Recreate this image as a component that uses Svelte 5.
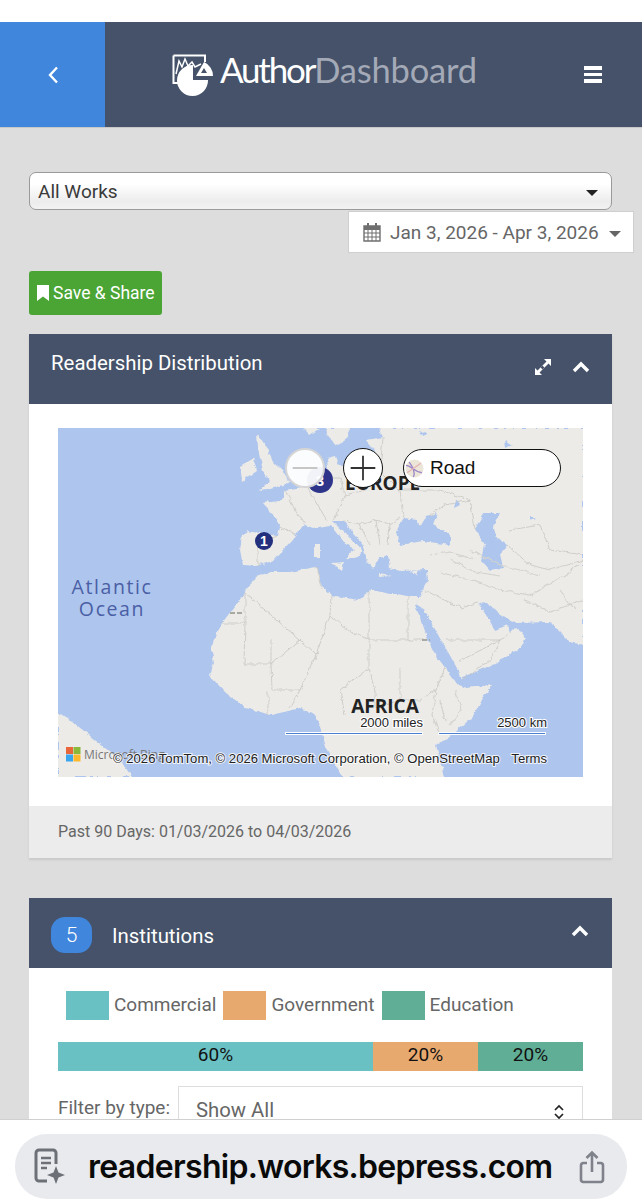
<script>
  const legend = [
    { label: 'Commercial', cls: 'teal' },
    { label: 'Government', cls: 'orange' },
    { label: 'Education', cls: 'green' }
  ];
  const bars = [
    { label: '60%', cls: 'teal', grow: 315 },
    { label: '20%', cls: 'orange', grow: 105 },
    { label: '20%', cls: 'green', grow: 105 }
  ];
  const borders = [
    'M245 593L271 615L300 640L316 655M222 623L245 623L245 593M245 623L244 664L271 664L271 640M271 664L300 640',
    'M316 567L322 590M331 595L330 615L316 655L300 690L272 690L271 664M330 615L343 627L369 640M369 590L369 640L369 668L340 690L345 715M369 640L424 640M408 597L408 640',
    'M300 690L290 708M268 691L268 715M369 668L375 690L375 708L400 700M400 668L400 700L420 700L436 690L445 668',
    'M425 590L440 598L462 608L478 602M462 680L490 660L500 640L512 632M458 662L500 640M446 640L500 640',
    'M278 536L258 545L258 566M280 526L295 535M285 490L295 510L305 525M307 486L318 505L327 521M320 478L340 478L345 495L333 521M345 495L365 490L380 470L383 438',
    'M343 521L360 525L376 520L390 525L400 518M360 525L370 545M376 520L380 545M390 525L388 545M380 470L400 490L403 518M400 490L440 490L470 500L475 528',
    'M430 515L445 505L470 500M510 530L540 525L550 550L583 555M507 545L530 565L550 570L583 560'
  ];
  const rough = [
    'M440 572L470 580L500 590L530 595L560 578L580 565M450 560L475 572L500 576M470 550L500 565L540 575',
    'M430 555L450 552L475 560M525 600L550 612L583 600M560 590L575 610',
    'M455 690L462 710L450 725M440 700L445 720M436 690L432 715L440 735'
  ];
</script>

<div class="page">
  <div class="status"></div>

  <header class="topbar">
    <button class="back" aria-label="Back">
      <svg viewBox="0 0 14 20" width="14" height="20"><path d="M11 2.500 4 10l7 7.500" fill="none" stroke="#fff" stroke-width="2.400"/></svg>
    </button>
    <div class="brand">
      <svg class="mark" viewBox="0 0 42 42" width="42" height="42">
        <path d="M1.500 1.500H33V8M1.500 1.500V29H6" fill="none" stroke="#fff" stroke-width="2"/>
        <path d="M4 20 7 7l3 6 3-8 3 7 4-4 3 5 6-3" fill="none" stroke="#fff" stroke-width="1.500"/>
        <path d="M21 11a15.500 15.500 0 1 0 15 15H21z" fill="#fff"/>
        <path d="M24 22 32 8a15 15 0 0 1 9 14z" fill="#fff"/>
        <path d="M29 19l3-5 3 5z" fill="#455269"/>
      </svg>
      <span class="wordmark">Author<span>Dashboard</span></span>
    </div>
    <button class="menu" aria-label="Menu"><i></i><i></i><i></i></button>
  </header>

  <main>
    <div class="select">
      <span>All Works</span>
      <i class="caret"></i>
    </div>
    <div class="date-row">
      <div class="date">
        <svg viewBox="0 0 18 20" width="18" height="20">
          <path d="M1 4h16v15H1z" fill="none" stroke="#6f6f6f" stroke-width="1.400"/>
          <path d="M1 4h16v4H1z" fill="#6f6f6f"/>
          <path d="M1 11h16M1 15h16M5 8v11M9 8v11M13 8v11" stroke="#6f6f6f" stroke-width="1"/>
          <path d="M5 1v4M13 1v4" stroke="#6f6f6f" stroke-width="2"/>
        </svg>
        <span>Jan 3, 2026 - Apr 3, 2026</span>
        <i class="caret grey"></i>
      </div>
    </div>
    <button class="save">
      <svg viewBox="0 0 12 16" width="12" height="16"><path d="M0 0h12v16L6 11.500 0 16z" fill="#fff"/></svg>
      Save &amp; Share
    </button>

    <section class="panel first">
      <div class="panel-head">
        <h2>Readership Distribution</h2>
        <div class="head-icons">
          <svg viewBox="0 0 18 18" width="18" height="18">
            <path d="M10 1h7v7l-2.500-2.500L5.500 14.500 8 17H1v-7l2.500 2.500 9-9z" fill="#fff"/>
            <path d="M7.500 8.500 9.500 10.500" stroke="#455269" stroke-width="2.500"/>
          </svg>
          <svg class="chev" viewBox="0 0 18 12" width="18" height="12"><path d="M2 10 9 3l7 7" fill="none" stroke="#fff" stroke-width="3.400"/></svg>
        </div>
      </div>
      <div class="map-wrap">
        <div class="map">
          <svg class="map-art" viewBox="58 428 525 349" width="525" height="349">
            <defs>
              <filter id="rough" x="0" y="0" width="100%" height="100%">
                <feTurbulence type="fractalNoise" baseFrequency="0.14" numOctaves="3" seed="4" result="noise"/>
                <feDisplacementMap in="SourceGraphic" in2="noise" scale="5" xChannelSelector="R" yChannelSelector="G"/>
                <feGaussianBlur stdDeviation="0.400"/>
              </filter>
            </defs>
            <rect x="58" y="428" width="525" height="349" fill="#aec5ed"/>
            <g filter="url(#rough)">
              <g fill="#ecebe8">
                <!-- Eurasia -->
                <path d="M242 535L248 531L278 536L280 526L273 515L262 503L280 501L285 490L307 486L320 478L328 468L327 458L335 456L338 466L363 465L377 458L372 448L367 441L383 438L380 428L583 428L583 645L570 642L560 632L550 622L517 623L500 615L487 602L478 603L488 618L495 630L508 625L510 633L515 628L527 638L520 648L497 663L460 678L458 670L448 652L437 633L425 610L416 604L420 595L428 580L427 570L400 571L390 568L388 555L380 558L373 568L367 561L362 543L343 521L333 521L348 535L362 551L356 558L345 558L355 550L343 541L330 525L313 528L305 525L295 535L292 540L282 551L273 561L255 566L243 565L240 550Z"/>
                <!-- Britain & Ireland -->
                <path d="M257 433L267 448L273 461L283 471L290 483L267 490L258 491L270 481L263 471L258 448Z"/>
                <path d="M240 466L253 458L257 471L242 481Z"/>
                <!-- Scandinavia -->
                <path d="M303 428L310 435L320 428Z"/>
                <path d="M326 428L328 438L337 446L345 441L350 428Z"/>
                <!-- Africa -->
                <path d="M256 577L245 593L222 623L211 647L214 663L209 675L226 693L246 708L271 715L301 708L316 715L320 727L327 750L342 777L444 777L440 760L436 745L451 735L473 717L483 698L492 685L467 688L458 685L447 670L437 657L425 633L417 610L415 605L420 597L406 597L371 590L357 600L331 595L322 587L316 567L290 572L271 572Z"/>
                <!-- South America -->
                <path d="M58 712L79 727L120 760L132 777L58 777Z"/>
                <!-- Islands -->
                <path d="M314 545L320 545L320 558L314 558Z M332 563L344 562L342 570Z M378 574L392 576L378 577Z M410 572L418 570L416 575Z"/>
              </g>
              <g fill="#aec5ed">
                <path d="M403 518L417 520L420 526L426 516L437 513L433 525L450 535L450 545L423 541L400 545L396 532Z"/>
                <path d="M485 513L500 513L493 525L497 538L507 545L500 555L503 568L490 570L482 561L485 545L475 528Z"/>
                <path d="M420 430L426 434L422 436Z M505 440L512 445L506 448Z M456 500L460 505L454 508Z M530 515L536 518L530 520Z"/>
              </g>
              <g fill="none" stroke="#c6c5c0" stroke-width="0.800">
                {#each borders as d}<path {d}/>{/each}
              </g>
              <g fill="none" stroke="#d3d2cd" stroke-width="1.200">
                {#each rough as d}<path {d}/>{/each}
              </g>
            </g>
            <path d="M422 640h8M230 613h14" stroke="#a9a9a4" stroke-width="2" stroke-dasharray="5 2"/>
            <text class="ocean" x="112" y="594" text-anchor="middle">Atlantic</text>
            <text class="ocean" x="112" y="616" text-anchor="middle">Ocean</text>
            <text class="continent" x="385" y="713" text-anchor="middle">AFRICA</text>
            <text class="continent" x="345" y="490">EUROPE</text>
            <circle cx="320" cy="480" r="13" fill="#2e348a"/>
            <text class="pin" x="320" y="486" text-anchor="middle" font-size="15">3</text>
            <circle cx="264" cy="541" r="9" fill="#22307e"/>
            <text class="pin" x="264" y="546" text-anchor="middle" font-size="14">1</text>
            <text class="scale" x="423" y="727" text-anchor="end">2000 miles</text>
            <text class="scale" x="547" y="727" text-anchor="end">2500 km</text>
            <path d="M285 733.500H423M438 733.500H546" stroke="#fff" stroke-width="3"/>
            <path d="M286 733.500H422M439 733.500H545" stroke="#4b7fd0" stroke-width="1"/>
            <rect x="66" y="747" width="7" height="7" fill="#e8663a"/>
            <rect x="73.500" y="747" width="7" height="7" fill="#8ab83a"/>
            <rect x="66" y="754.500" width="7" height="7" fill="#3ba6ee"/>
            <rect x="73.500" y="754.500" width="7" height="7" fill="#fdb92d"/>
            <text class="ms" x="84" y="759">Microsoft Bing</text>
            <text class="attr" x="113" y="763">© 2026 TomTom, © 2026 Microsoft Corporation, © OpenStreetMap</text>
            <text class="attr" x="547" y="763" text-anchor="end">Terms</text>
          </svg>
          <div class="controls">
            <button class="zoom off" aria-label="Zoom out"><svg viewBox="0 0 38 38" width="36" height="36"><path d="M6 19h26" stroke="#bdbdbd" stroke-width="1.800"/></svg></button>
            <button class="zoom" aria-label="Zoom in"><svg viewBox="0 0 38 38" width="36" height="36"><path d="M6 19h26M19 6v26" stroke="#333" stroke-width="1.900"/></svg></button>
            <div class="road">
              <svg viewBox="0 0 18 18" width="19" height="19">
                <circle cx="9" cy="9" r="8.500" fill="#ece6d8"/>
                <path d="M1 6c5 0 7 6 15 7M4 3c3 4 6 10 4 14" fill="none" stroke="#9c86c9" stroke-width="1.300"/>
                <path d="M2 13 15 4" stroke="#e3b3b3" stroke-width="1.200"/>
              </svg>
              <span>Road</span>
            </div>
          </div>
        </div>
      </div>
      <div class="panel-foot">Past 90 Days: 01/03/2026 to 04/03/2026</div>
    </section>

    <section class="panel">
      <div class="panel-head inst">
        <span class="count">5</span>
        <h2>Institutions</h2>
        <svg class="chev solo" viewBox="0 0 18 12" width="18" height="12"><path d="M2 10 9 3l7 7" fill="none" stroke="#fff" stroke-width="3.400"/></svg>
      </div>
      <div class="inst-body">
        <div class="legend">
          {#each legend as item}
            <div class="legend-item"><i class={item.cls}></i><span>{item.label}</span></div>
          {/each}
        </div>
        <div class="stack">
          {#each bars as b}
            <div class={b.cls} style="flex-basis:{b.grow}px">{b.label}</div>
          {/each}
        </div>
        <div class="filter">
          <label for="t">Filter by type:</label>
          <div class="filter-box" id="t">
            <span>Show All</span>
            <svg viewBox="0 0 12 18" width="12" height="18"><path d="M2 7l4-4 4 4M2 11l4 4 4-4" fill="none" stroke="#222" stroke-width="1.700"/></svg>
          </div>
        </div>
      </div>
    </section>
  </main>

  <footer class="browser">
    <div class="pill">
      <svg class="doc" viewBox="0 0 32 38" width="32" height="38">
        <path d="M14 33H6a3 3 0 0 1-3-3V5a3 3 0 0 1 3-3h14a3 3 0 0 1 3 3v11" fill="none" stroke="#6d7077" stroke-width="3"/>
        <path d="M8 10h10M8 15h10M8 20h6" stroke="#6d7077" stroke-width="2.400"/>
        <path d="M23 18l2.500 6.500L32 27l-6.500 2.500L23 36l-2.500-6.500L14 27l6.500-2.500z" fill="#6d7077"/>
      </svg>
      <span class="url">readership.works.bepress.com</span>
      <svg class="share" viewBox="0 0 26 34" width="26" height="34">
        <path d="M8 13H4a2.500 2.500 0 0 0-2 2.500v14A2.500 2.500 0 0 0 4 32h18a2.500 2.500 0 0 0 2-2.500v-14A2.500 2.500 0 0 0 22 13h-4" fill="none" stroke="#7f828a" stroke-width="2.600"/>
        <path d="M13 22V3M7.500 8 13 2.500 18.500 8" fill="none" stroke="#7f828a" stroke-width="2.600"/>
      </svg>
    </div>
  </footer>
</div>

<style>
  :global(body) { margin: 0; background: #dddddd; overflow: hidden; }
  .page { width: 642px; height: 1200px; overflow: hidden; position: relative; font-family: Roboto, "Liberation Sans", sans-serif; background: #dddddd; }
  .status { height: 22px; background: #fff; }
  button { border: 0; padding: 0; margin: 0; font: inherit; cursor: pointer; }

  .topbar { height: 105px; background: #455269; display: flex; align-items: stretch; box-shadow: 0 1px 0 #c8c8c8; }
  .back { width: 105px; background: #3f86dc; display: flex; align-items: center; justify-content: center; }
  .brand { flex: 1; display: flex; align-items: center; gap: 6px; padding: 0 0 0 67px; }
  .wordmark { font-family: Lato, sans-serif; font-weight: 400; font-size: 35px; letter-spacing: -2.200px; color: #fff; line-height: 1; margin-top: -9px; }
  .wordmark span { color: #a3a9b6; letter-spacing: -0.200px; font-size: 34.500px; }
  .menu { width: 18px; margin-right: 40px; background: none; display: flex; flex-direction: column; justify-content: center; gap: 3px; }
  .menu i { display: block; height: 3.500px; background: #fff; }

  main { padding: 45px 30px 0 29px; }
  .select { height: 36px; border: 1px solid #9a9a9a; border-radius: 7px; background: linear-gradient(#fff, #fff 30%, #ececec 80%, #f2f2f2); display: flex; align-items: center; justify-content: space-between; padding: 0 13px 0 8px; color: #3a3a3a; font-size: 19px; }
  .caret { width: 0; height: 0; border-left: 6px solid transparent; border-right: 6px solid transparent; border-top: 6px solid #222; margin-top: 3px; }
  .caret.grey { border-top-color: #666; border-left-width: 6.500px; border-right-width: 6.500px; }
  .date-row { display: flex; justify-content: flex-end; margin-right: -22px; margin-top: 1px; }
  .date { width: 286px; height: 42px; background: #fff; border: 1px solid #cfcfcf; display: flex; align-items: center; padding-left: 14px; gap: 9px; color: #666; font-size: 19px; box-sizing: border-box; }
  .date .caret { margin-left: 1px; }
  .save { display: flex; align-items: center; gap: 4px; margin-top: 18px; width: 133px; height: 44px; background: #4aa535; color: #fff; border-radius: 3px; font-size: 17.500px; padding-left: 8px; box-sizing: border-box; }

  .panel { background: #fff; }
  .panel.first { margin-top: 19px; margin-bottom: 40px; box-shadow: 0 2px 2px #c9c9c9; }
  .panel-head { height: 70px; background: #455269; color: #fff; display: flex; justify-content: space-between; padding: 0 22px; box-sizing: border-box; }
  h2 { margin: 0; font-weight: 400; font-size: 20.400px; line-height: 59px; }
  .head-icons { display: flex; gap: 20px; align-items: center; height: 66px; }
  .map-wrap { padding: 24px 29px 29px; height: 349px; }
  .map { position: relative; width: 525px; height: 349px; overflow: hidden; }
  .map-art { display: block; }
  .ocean { font-family: "Open Sans", sans-serif; font-size: 19.500px; letter-spacing: 1.600px; fill: #4a5fa5; }
  .continent { font-family: "Open Sans", sans-serif; font-weight: 700; font-size: 19px; fill: #222; }
  .pin { font-family: "Liberation Sans", sans-serif; font-weight: 700; fill: #fff; }
  .scale { font-family: "Liberation Sans", sans-serif; font-size: 13px; fill: #222; stroke: #fff; stroke-width: 2px; paint-order: stroke; }
  .ms { font-family: "Open Sans", sans-serif; font-size: 12px; fill: #777; }
  .attr { font-family: "Liberation Sans", sans-serif; font-size: 13.100px; fill: #222; stroke: rgba(255,255,255,.8); stroke-width: 2px; paint-order: stroke; }
  .controls { position: absolute; left: 227px; top: 20px; display: flex; gap: 18px; align-items: center; }
  .zoom { width: 40px; height: 40px; border-radius: 50%; background: #fff; border: 1.500px solid #111; box-sizing: border-box; display: flex; align-items: center; justify-content: center; }
  .zoom.off { border: 2px solid #d5d5d5; background: rgba(255,255,255,.94); }
  .road { width: 158px; height: 38px; border: 1.500px solid #111; border-radius: 20px; background: #fff; display: flex; align-items: center; gap: 6px; font-family: "Liberation Sans", sans-serif; font-size: 19px; color: #111; padding-left: 1px; box-sizing: border-box; margin-left: 2px; }
  .panel-foot { background: #ececec; height: 52px; padding-left: 29px; box-sizing: border-box; line-height: 52px; font-size: 16px; color: #666; }

  .inst { justify-content: flex-start; align-items: center; padding-top: 4px; }
  .count { width: 41px; height: 36px; border-radius: 14px; background: #3f86dc; color: #fff; font-size: 21px; font-weight: 300; display: flex; align-items: center; justify-content: center; margin-right: 20px; }
  .inst h2 { line-height: 36px; flex: 1; padding-top: 2px; }
  .chev.solo { margin: -8px 1px 0 0; }
  .inst-body { padding: 23px 29px 0; }
  .legend { display: flex; padding-left: 8px; gap: 7px; height: 29px; }
  .legend-item { display: flex; align-items: center; gap: 5px; font-size: 19px; color: #666; }
  .legend-item span { margin-top: -3px; }
  .legend-item i { display: block; width: 43px; height: 29px; }
  .teal { background: #6ac1c3; }
  .orange { background: #e8a96f; }
  .green { background: #60ae95; }
  .stack { display: flex; margin-top: 22px; height: 29px; }
  .stack div { box-sizing: border-box; text-align: center; font-size: 19px; line-height: 26px; color: #111; }
  .filter { display: flex; align-items: flex-start; gap: 8px; margin-top: 15px; }
  .filter label { font-size: 19px; color: #666; line-height: 44px; white-space: nowrap; }
  .filter-box { flex: 1; height: 50px; border: 1px solid #ddd; box-sizing: border-box; display: flex; justify-content: space-between; padding: 11px 17px 0 17px; font-size: 20.300px; color: #666; }
  .filter-box svg { margin-top: 5px; }

  .browser { position: fixed; left: 0; right: 0; bottom: 0; height: 81px; background: #fff; border-top: 1px solid #d0d0d0; box-sizing: border-box; padding: 14px 15px 0; }
  .pill { height: 65px; background: #e9eaee; border-radius: 32px; display: flex; align-items: center; padding: 0 22px 0 18px; }
  .doc { flex: none; margin-top: 1px; }
  .url { font-family: Inter, Roboto, sans-serif; font-weight: 600; font-size: 32px; letter-spacing: -0.700px; color: #0a0a0a; margin-left: 23px; flex: 1; white-space: nowrap; }
  .share { flex: none; }
</style>
